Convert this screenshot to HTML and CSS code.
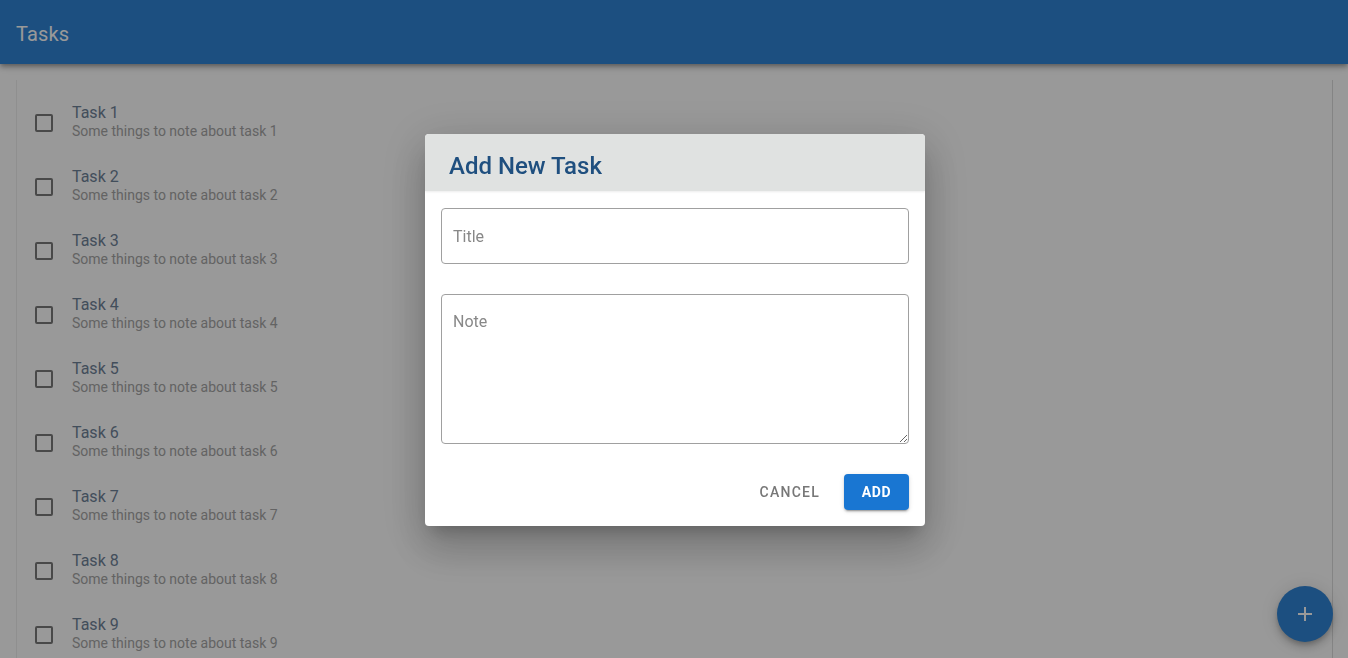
FILE: index.html
```html
<!DOCTYPE html>
<html lang="en">
<head>
<meta charset="utf-8">
<title>Tasks</title>
<link rel="stylesheet" href="styles.css">
</head>
<body>
<header class="app-bar">
  <h1 class="app-title">Tasks</h1>
</header>
<main class="content">
  <ul class="task-list">
    <li class="task"><span class="check"></span><div class="task-text"><div class="task-title">Task 1</div><div class="task-note">Some things to note about task 1</div></div></li>
    <li class="task"><span class="check"></span><div class="task-text"><div class="task-title">Task 2</div><div class="task-note">Some things to note about task 2</div></div></li>
    <li class="task"><span class="check"></span><div class="task-text"><div class="task-title">Task 3</div><div class="task-note">Some things to note about task 3</div></div></li>
    <li class="task"><span class="check"></span><div class="task-text"><div class="task-title">Task 4</div><div class="task-note">Some things to note about task 4</div></div></li>
    <li class="task"><span class="check"></span><div class="task-text"><div class="task-title">Task 5</div><div class="task-note">Some things to note about task 5</div></div></li>
    <li class="task"><span class="check"></span><div class="task-text"><div class="task-title">Task 6</div><div class="task-note">Some things to note about task 6</div></div></li>
    <li class="task"><span class="check"></span><div class="task-text"><div class="task-title">Task 7</div><div class="task-note">Some things to note about task 7</div></div></li>
    <li class="task"><span class="check"></span><div class="task-text"><div class="task-title">Task 8</div><div class="task-note">Some things to note about task 8</div></div></li>
    <li class="task"><span class="check"></span><div class="task-text"><div class="task-title">Task 9</div><div class="task-note">Some things to note about task 9</div></div></li>
  </ul>
</main>
<button class="fab" aria-label="Add task">
  <svg width="24" height="24" viewBox="0 0 24 24"><path d="M19 13h-6v6h-2v-6H5v-2h6V5h2v6h6v2z" fill="#fff"/></svg>
</button>
<div class="backdrop">
  <div class="dialog">
    <div class="dialog-head"><h2 class="dialog-title">Add New Task</h2></div>
    <div class="dialog-body">
      <input class="field" type="text" placeholder="Title">
      <textarea class="field area" placeholder="Note"></textarea>
    </div>
    <div class="dialog-actions">
      <button class="btn-text">Cancel</button>
      <button class="btn-primary">Add</button>
    </div>
  </div>
</div>
</body>
</html>
```

FILE: styles.css
```css
* { box-sizing: border-box; }
html, body { height: 100%; }
body {
  margin: 0;
  font-family: Roboto, "Liberation Sans", Arial, sans-serif;
  background: #fff;
  overflow: hidden;
}
.app-bar {
  height: 64px;
  background: #2f84d5;
  display: flex;
  align-items: center;
  padding: 3px 16px 0;
  box-shadow: 0 2px 4px -1px rgba(0,0,0,.25), 0 4px 5px 0 rgba(0,0,0,.16), 0 1px 10px 0 rgba(0,0,0,.12);
  position: relative;
  z-index: 1;
}
.app-title {
  margin: 0;
  color: #fff;
  font-size: 20px;
  font-weight: 400;
  letter-spacing: .15px;
}
.content {
  padding: 16px 15px 0 16px;
}
.task-list {
  list-style: none;
  margin: 0;
  padding: 10px 0 0;
  border-left: 1px solid #eee;
  border-right: 1px solid #ddd;
  min-height: 600px;
}
.task {
  height: 64px;
  display: flex;
  align-items: center;
  padding-left: 18px;
}
.check {
  width: 18px;
  height: 18px;
  border: 2px solid #7a7a7a;
  border-radius: 2px;
  margin-right: 19px;
  flex: none;
  margin-top: 1px;
}
.task-text {
  display: flex;
  flex-direction: column;
  margin-top: -2px;
}
.task-title {
  font-size: 16px;
  line-height: 20px;
  color: #6f8298;
}
.task-note {
  font-size: 14px;
  line-height: 18px;
  margin-top: -1px;
  color: #a6a6a6;
}
.fab {
  position: fixed;
  right: 15px;
  bottom: 16px;
  width: 56px;
  height: 56px;
  border-radius: 50%;
  border: 0;
  background: #2f84d5;
  display: flex;
  align-items: center;
  justify-content: center;
  padding: 0;
  box-shadow: 0 3px 5px -1px rgba(0,0,0,.2), 0 6px 10px 0 rgba(0,0,0,.14), 0 1px 18px 0 rgba(0,0,0,.12);
}
.backdrop {
  position: fixed;
  inset: 0;
  background: rgba(0,0,0,.4);
  z-index: 10;
  display: flex;
  justify-content: center;
  align-items: flex-start;
  padding: 134px 0 0 2px;
}
.dialog {
  width: 500px;
  background: #fff;
  border-radius: 4px;
  overflow: hidden;
  box-shadow: 0 11px 15px -7px rgba(0,0,0,.2), 0 24px 38px 3px rgba(0,0,0,.14), 0 9px 46px 8px rgba(0,0,0,.12);
}
.dialog-head {
  height: 57px;
  background: #e0e2e1;
  padding: 0 24px;
  display: flex;
  align-items: center;
  box-shadow: 0 1px 2px rgba(0,0,0,.08);
  position: relative;
}
.dialog-title {
  margin: 0;
  font-size: 24px;
  font-weight: 500;
  color: #1f4f7f;
  padding-top: 7px;
}
.dialog-body {
  padding: 17px 16px 0;
  display: flex;
  flex-direction: column;
  gap: 30px;
}
.field {
  display: block;
  width: 100%;
  height: 56px;
  border: 1px solid #a0a0a0;
  border-radius: 4px;
  padding: 0 11px;
  font-family: inherit;
  font-size: 16px;
  color: #333;
  outline: none;
}
.field::placeholder { color: #888; }
.area {
  height: 150px;
  padding-top: 17px;
  resize: vertical;
}
.dialog-actions {
  display: flex;
  justify-content: flex-end;
  align-items: center;
  gap: 8px;
  padding: 30px 16px 16px;
}
.btn-text, .btn-primary {
  font-family: inherit;
  font-size: 14px;
  font-weight: 500;
  letter-spacing: 1.25px;
  text-transform: uppercase;
  height: 36px;
  border: 0;
  border-radius: 4px;
  cursor: pointer;
}
.btn-text {
  background: none;
  color: #777;
  padding: 0 16px 0 17px;
}
.btn-primary {
  background: #1976d2;
  color: #fff;
  font-weight: 700;
  width: 65px;
  padding: 0;
  letter-spacing: .6px;
  box-shadow: 0 3px 1px -2px rgba(0,0,0,.2), 0 2px 2px 0 rgba(0,0,0,.14), 0 1px 5px 0 rgba(0,0,0,.12);
}
```
